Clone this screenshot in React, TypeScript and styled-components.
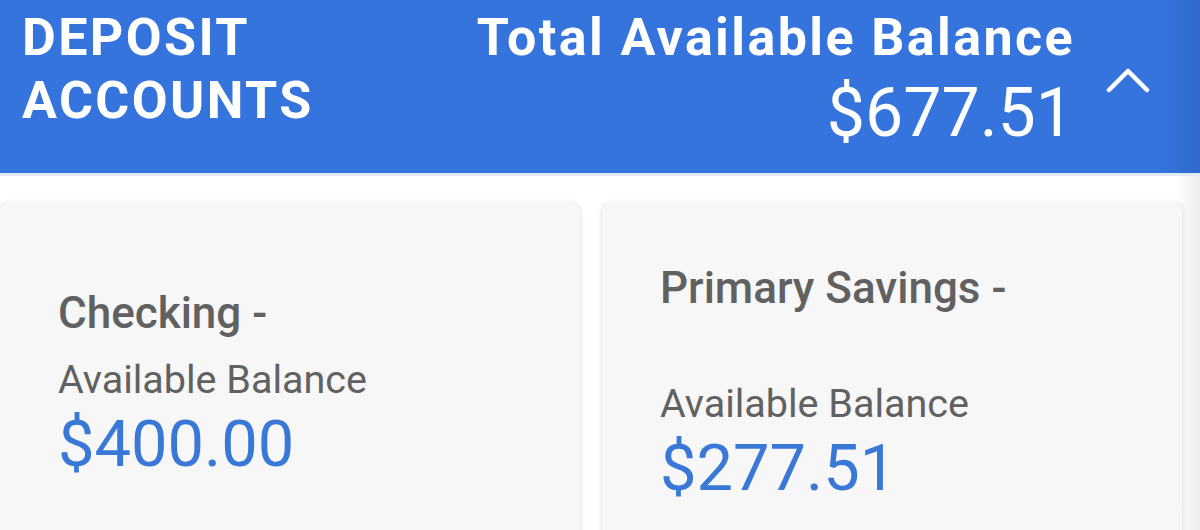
import React from "react";
import styled, { createGlobalStyle } from "styled-components";

const Global = createGlobalStyle`
  html, body { margin: 0; padding: 0; background: #ffffff; }
  body { font-family: Roboto, "Noto Sans", "Liberation Sans", sans-serif; overflow: hidden; }
  * { box-sizing: border-box; }
`;

const Page = styled.div`
  width: 1200px;
  height: 530px;
  overflow: hidden;
  background: linear-gradient(90deg, #ffffff 0, #ffffff 1176px, #ececec 1200px);
  display: flex;
  flex-direction: column;
`;

const Header = styled.header`
  height: 176px;
  flex: none;
  background: linear-gradient(90deg, #3474dc 0, #3474dc 1160px, #2f6acb 1200px);
  border-bottom: 3px solid #e1eaf7;
  display: flex;
  align-items: flex-start;
  padding: 6px 0 0 22px;
  color: #ffffff;
`;

const Title = styled.h1`
  margin: 0;
  font-size: 52px;
  line-height: 63px;
  font-weight: 700;
  letter-spacing: 2.4px;
  flex: 1;
`;

const Totals = styled.div`
  display: flex;
  flex-direction: column;
  align-items: flex-end;
`;

const TotalLabel = styled.div`
  font-size: 52px;
  line-height: 63px;
  font-weight: 700;
  letter-spacing: 2.4px;
  margin-right: -1px;
`;

const TotalAmount = styled.div`
  font-size: 68px;
  line-height: 88px;
  font-weight: 400;
`;

const Toggle = styled.button`
  background: none;
  border: none;
  padding: 0;
  margin: 61px 50px 0 32px;
  width: 44px;
  height: 26px;
  display: flex;
  cursor: pointer;
`;

const Cards = styled.div`
  display: grid;
  grid-template-columns: 580px 580px;
  gap: 22px;
  padding-top: 27px;
`;

const Card = styled.section`
  height: 362px;
  background: #f7f7f7;
  border-radius: 8px;
  box-shadow: 0 1px 4px rgba(0, 0, 0, 0.12), 0 0 10px rgba(0, 0, 0, 0.04);
  display: flex;
  flex-direction: column;
  justify-content: center;
  padding: 0 58px;
`;

const AccountName = styled.div`
  font-size: 44px;
  line-height: 52px;
  font-weight: 500;
  color: #616161;
`;

const AccountNumber = styled.div`
  height: 49px;
`;

const BalanceLabel = styled.div`
  font-size: 39.5px;
  line-height: 46px;
  font-weight: 400;
  color: #616161;
  margin-top: 18px;
`;

const BalanceAmount = styled.div`
  font-size: 65px;
  line-height: 76px;
  font-weight: 400;
  color: #3a78d8;
  margin-top: 3px;
`;

const accounts = [
  { name: "Checking -", number: false, balance: "$400.00" },
  { name: "Primary Savings -", number: true, balance: "$277.51" },
];

export default function App() {
  return (
    <>
      <Global />
      <Page>
        <Header>
          <Title>
            DEPOSIT
            <br />
            ACCOUNTS
          </Title>
          <Totals>
            <TotalLabel>Total Available Balance</TotalLabel>
            <TotalAmount>$677.51</TotalAmount>
          </Totals>
          <Toggle aria-label="Collapse">
            <svg width="44" height="26" viewBox="0 0 44 26" fill="none">
              <path d="M3 23 L22 4 L41 23" stroke="#ffffff" strokeWidth="4.5" strokeLinecap="round" strokeLinejoin="round" />
            </svg>
          </Toggle>
        </Header>
        <Cards>
          {accounts.map((a) => (
            <Card key={a.name}>
              <AccountName>{a.name}</AccountName>
              {a.number && <AccountNumber />}
              <BalanceLabel>Available Balance</BalanceLabel>
              <BalanceAmount>{a.balance}</BalanceAmount>
            </Card>
          ))}
        </Cards>
      </Page>
    </>
  );
}
